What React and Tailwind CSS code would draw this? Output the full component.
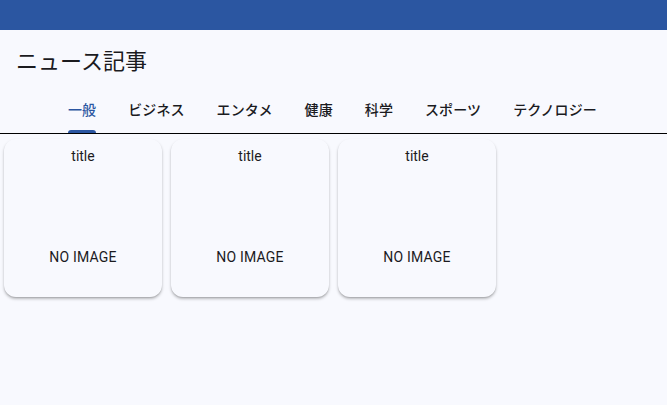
import { useState } from 'react';

const tabs = ['一般', 'ビジネス', 'エンタメ', '健康', '科学', 'スポーツ', 'テクノロジー'];
const articles = [{ id: 1, title: 'title' }, { id: 2, title: 'title' }, { id: 3, title: 'title' }];

function App() {
  const [active, setActive] = useState(0);

  return (
    <div
      className="min-h-screen bg-[#f8f9fe] text-[#1b1b1f]"
      style={{ fontFamily: "Roboto, 'Noto Sans CJK JP', sans-serif" }}
    >
      {/* 上部バー */}
      <div className="h-[30px] bg-[#2b56a1]" />

      <h1 className="pl-4 pt-[17px] text-[22px] leading-[30px] font-normal">ニュース記事</h1>

      {/* タブ */}
      <div className="mt-[10px] flex h-[47px] border-b border-black pl-[52px]">
        {tabs.map((tab, i) => (
          <button
            key={tab}
            onClick={() => setActive(i)}
            className={`relative flex items-center px-4 text-[14px] font-medium tracking-[0.1px] ${
              i === active ? 'text-[#2b56a1]' : 'text-[#1b1b1f]'
            }`}
          >
            {tab}
            {i === active && (
              <span className="absolute bottom-0 left-4 right-4 h-[3px] rounded-t-[3px] bg-[#2b56a1]" />
            )}
          </button>
        ))}
      </div>

      {/* 記事カード */}
      <div className="flex gap-[9px] pl-1 pt-[5px]">
        {articles.map((a) => (
          <div
            key={a.id}
            className="h-[158px] w-[158px] rounded-xl bg-[#f8f9fe] text-center shadow-[0_2px_3px_rgba(0,0,0,0.25),0_1px_1px_rgba(0,0,0,0.1)]"
          >
            <p className="pt-[7px] text-[14px] leading-5">{a.title}</p>
            <p className="mt-[81px] text-[14px] leading-5 tracking-[0.2px]">NO IMAGE</p>
          </div>
        ))}
      </div>
    </div>
  );
}

export default App;
